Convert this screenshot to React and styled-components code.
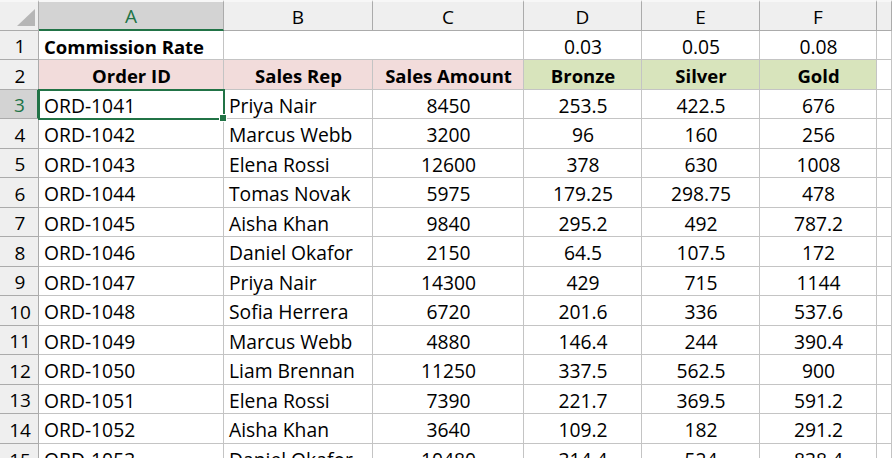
import React from "react";
import styled, { createGlobalStyle } from "styled-components";

// Spreadsheet view: commission tiers per order

const GlobalStyle = createGlobalStyle`
  html, body {
    margin: 0;
    padding: 0;
    background: #ffffff;
    overflow: hidden;
  }
`;

const columns = ["A", "B", "C", "D", "E", "F", ""];

const rates = { D: 0.03, E: 0.05, F: 0.08 };

const orders = [
  ["ORD-1041", "Priya Nair", 8450],
  ["ORD-1042", "Marcus Webb", 3200],
  ["ORD-1043", "Elena Rossi", 12600],
  ["ORD-1044", "Tomas Novak", 5975],
  ["ORD-1045", "Aisha Khan", 9840],
  ["ORD-1046", "Daniel Okafor", 2150],
  ["ORD-1047", "Priya Nair", 14300],
  ["ORD-1048", "Sofia Herrera", 6720],
  ["ORD-1049", "Marcus Webb", 4880],
  ["ORD-1050", "Liam Brennan", 11250],
  ["ORD-1051", "Elena Rossi", 7390],
  ["ORD-1052", "Aisha Khan", 3640],
  ["ORD-1053", "Daniel Okafor", 10480],
];

// round away float noise (e.g. 253.50000001)
const fmt = (n) => String(Math.round(n * 10000) / 10000);

const App = () => {
  return (
    <>
      <GlobalStyle />
      <Sheet>
        <Corner>
          <CornerMark />
        </Corner>
        {columns.map((c, i) => (
          <ColHead key={"h" + i} $active={c === "A"}>
            {c}
          </ColHead>
        ))}

        {/* row 1 - B1:C1 merged */}
        <RowHead>1</RowHead>
        <Cell $bold>Commission Rate</Cell>
        <Cell $span={2} />
        <Cell $align="center">{rates.D}</Cell>
        <Cell $align="center">{rates.E}</Cell>
        <Cell $align="center">{rates.F}</Cell>
        <Cell />

        {/* row 2 */}
        <RowHead>2</RowHead>
        <Cell $bold $align="center" $fill="#f2dcdb">Order ID</Cell>
        <Cell $bold $align="center" $fill="#f2dcdb">Sales Rep</Cell>
        <Cell $bold $align="center" $fill="#f2dcdb">Sales Amount</Cell>
        <Cell $bold $align="center" $fill="#d8e4bc">Bronze</Cell>
        <Cell $bold $align="center" $fill="#d8e4bc">Silver</Cell>
        <Cell $bold $align="center" $fill="#d8e4bc">Gold</Cell>
        <Cell />

        {orders.map(([id, rep, amount], i) => {
          const row = i + 3;
          return (
            <React.Fragment key={id}>
              <RowHead $active={row === 3}>{row}</RowHead>
              <Cell $selected={row === 3}>
                {id}
                {row === 3 && <Handle />}
              </Cell>
              <Cell>{rep}</Cell>
              <Cell $align="center">{amount}</Cell>
              <Cell $align="center">{fmt(amount * rates.D)}</Cell>
              <Cell $align="center">{fmt(amount * rates.E)}</Cell>
              <Cell $align="center">{fmt(amount * rates.F)}</Cell>
              <Cell />
            </React.Fragment>
          );
        })}
      </Sheet>
    </>
  );
};

export default App;

const Sheet = styled.div`
  display: grid;
  grid-template-columns: 39px 185px 149px 151px 118px 118px 117px 1fr;
  grid-template-rows: 31px repeat(7, 29px 30px);
  width: 892px;
  height: 458px;
  overflow: hidden;
  font-family: "Open Sans", "Noto Sans", sans-serif;
  font-size: 19px;
  color: #000000;
`;

const Corner = styled.div`
  position: relative;
  box-sizing: border-box;
  background: #efefef;
  border-top: 2px solid #f7f7f7;
  border-right: 1px solid #ababab;
  border-bottom: 1px solid #ababab;
`;

const CornerMark = styled.div`
  position: absolute;
  right: 3px;
  bottom: 4px;
  width: 0;
  height: 0;
  border-left: 18px solid transparent;
  border-bottom: 17px solid #b6b6b6;
`;

const ColHead = styled.div`
  box-sizing: border-box;
  display: flex;
  align-items: center;
  justify-content: center;
  background: ${(p) => (p.$active ? "#d3d3d3" : "#efefef")};
  color: ${(p) => (p.$active ? "#217346" : "#000000")};
  border-top: 2px solid #f7f7f7;
  border-right: 1px solid #ababab;
  border-bottom: ${(p) => (p.$active ? "2px solid #217346" : "1px solid #ababab")};
  font-size: 19px;
  padding-top: 1px;
`;

const RowHead = styled.div`
  box-sizing: border-box;
  display: flex;
  align-items: center;
  justify-content: center;
  background: ${(p) => (p.$active ? "#d3d3d3" : "#efefef")};
  color: ${(p) => (p.$active ? "#217346" : "#000000")};
  border-right: ${(p) => (p.$active ? "2px solid #217346" : "1px solid #ababab")};
  border-bottom: 1px solid #ababab;
  font-size: 19px;
  padding: 2px 0 0 2px;
`;

const Cell = styled.div`
  position: relative;
  box-sizing: border-box;
  grid-column: span ${(p) => p.$span || 1};
  display: flex;
  align-items: center;
  justify-content: ${(p) => (p.$align === "center" ? "center" : "flex-start")};
  padding: 2px 4px 0 5px;
  white-space: nowrap;
  background: ${(p) => p.$fill || "#ffffff"};
  border-right: 1px solid #c4c4c4;
  border-bottom: 1px solid #c4c4c4;
  font-weight: ${(p) => (p.$bold ? 700 : 400)};
  font-size: ${(p) => (p.$bold ? "18.5px" : "19.3px")};
  outline: ${(p) => (p.$selected ? "2px solid #217346" : "none")};
  outline-offset: -1px;
  z-index: ${(p) => (p.$selected ? 1 : 0)};
`;

const Handle = styled.span`
  position: absolute;
  right: -4px;
  bottom: -4px;
  width: 6px;
  height: 6px;
  background: #217346;
  border: 1px solid #ffffff;
`;
